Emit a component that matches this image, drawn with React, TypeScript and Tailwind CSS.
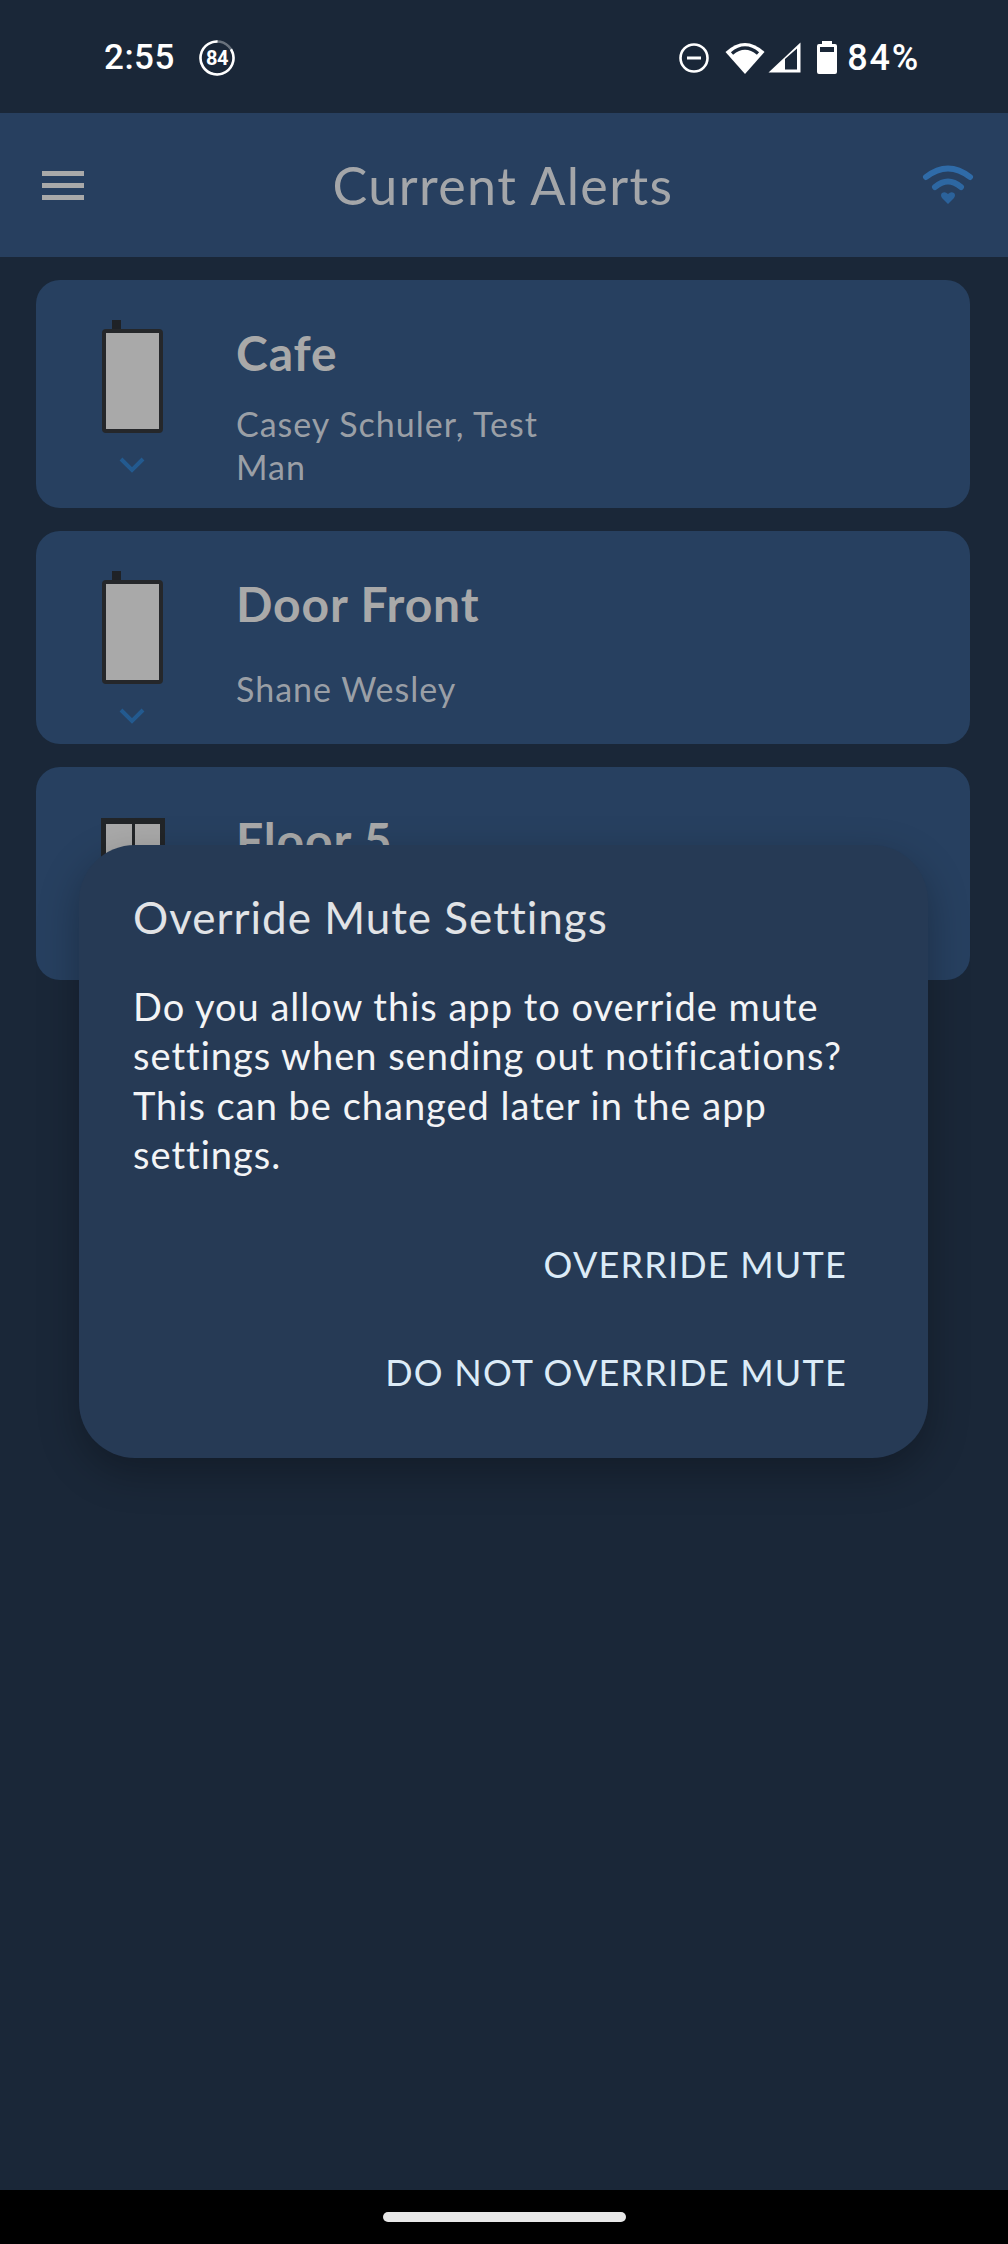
const FONT = "font-['Lato','Noto_Sans',sans-serif]";

type Alert = {
  name: string;
  people: string[];
  height: string;
  peopleGap: string;
  kind: "door" | "window";
};

const ALERTS: Alert[] = [
  { name: "Cafe", people: ["Casey Schuler, Test", "Man"], height: "h-[228px]", peopleGap: "mt-[19px]", kind: "door" },
  { name: "Door Front", people: ["Shane Wesley"], height: "h-[213px]", peopleGap: "mt-[33px]", kind: "door" },
  { name: "Floor 5", people: [], height: "h-[213px]", peopleGap: "mt-[33px]", kind: "window" },
];

function DoorIcon() {
  return (
    <div className="pl-[66px] pt-[40px]">
      <div className="ml-[10px] h-[9px] w-[9px] bg-[#1f2226]" />
      <div className="h-[104px] w-[61px] rounded-[4px] border-[4px] border-[#25272a] bg-[#a9a9a9]" />
      <svg className="ml-[17px] mt-[24px]" width="26" height="16" viewBox="0 0 26 16">
        <path d="M2 2 L13 13 L24 2" fill="none" stroke="#235a8f" strokeWidth="4" />
      </svg>
    </div>
  );
}

function WindowIcon() {
  return (
    <div className="pl-[65px] pt-[51px]">
      <div className="flex h-[100px] w-[64px] gap-[3px] border-x-[5px] border-t-[6px] border-[#222528] bg-[#222528]">
        <div className="flex-1 bg-[#a9a9a9]" />
        <div className="flex-1 bg-[#a9a9a9]" />
      </div>
    </div>
  );
}

function AlertCard({ alert }: { alert: Alert }) {
  return (
    <div className={`flex overflow-hidden rounded-[24px] bg-[#274060] ${alert.height}`}>
      <div className="w-[200px] shrink-0">{alert.kind === "door" ? <DoorIcon /> : <WindowIcon />}</div>
      <div className="pt-[43px]">
        <p className="text-[48px] font-bold leading-[60px] tracking-[0.9px] text-[#a9a9a9]">{alert.name}</p>
        <div className={`${alert.peopleGap} text-[34px] leading-[43px] tracking-[1px] text-[#9a9fa6]`}>
          {alert.people.map((p) => (
            <p key={p}>{p}</p>
          ))}
        </div>
      </div>
    </div>
  );
}

function BatteryBadge() {
  return (
    <svg className="ml-[24px]" width="36" height="36" viewBox="0 0 36 36">
      <circle cx="18" cy="18" r="16.5" fill="none" stroke="#fff" strokeOpacity="0.35" strokeWidth="2.5" />
      <circle
        cx="18"
        cy="18"
        r="16.5"
        fill="none"
        stroke="#fff"
        strokeWidth="2.5"
        strokeDasharray="87 104"
        transform="rotate(-32 18 18)"
      />
      <text x="18" y="25" textAnchor="middle" fontSize="20" fontWeight="700" fill="#fff" letterSpacing="-0.5">
        84
      </text>
    </svg>
  );
}

function StatusIcons() {
  return (
    <div className="flex items-center">
      <svg width="30" height="30" viewBox="0 0 30 30">
        <circle cx="15" cy="15" r="13.5" fill="none" stroke="#fff" strokeWidth="2.6" />
        <rect x="8" y="13.5" width="14" height="3" fill="#fff" />
      </svg>
      <svg className="ml-[16px]" width="40" height="33" viewBox="0 0 40 33">
        <path d="M0.5 11 Q20 -7 39.5 11 L20 33 Z" fill="#fff" />
        <path d="M7 12.5 Q20 1.5 33 12.5" fill="none" stroke="#1a2738" strokeWidth="3.4" />
      </svg>
      <svg className="ml-[3px]" width="33" height="31" viewBox="0 0 33 31">
        <path d="M0.5 30.5 L32.5 0.5 V30.5 Z" fill="#fff" />
        <path d="M17 17 L29 6.5 V27.5 H17 Z" fill="#1a2738" />
      </svg>
      <svg className="ml-[16px]" width="20" height="33" viewBox="0 0 20 33">
        <path d="M5 0 H15 V3 H18 Q20 3 20 5 V31 Q20 33 18 33 H2 Q0 33 0 31 V5 Q0 3 2 3 H5 Z" fill="#fff" />
        <rect x="3" y="6" width="14" height="5" fill="#1a2738" />
      </svg>
      <span className="ml-[10px] text-[36px] font-medium leading-none tracking-[1.8px] text-white">84%</span>
    </div>
  );
}

function HeartWifi() {
  return (
    <svg width="52" height="40" viewBox="0 0 52 40">
      <path d="M4 12 Q26 -5 48 12" fill="none" stroke="#2f6ba8" strokeWidth="6" strokeLinecap="round" />
      <path d="M13 22 Q26 11 39 22" fill="none" stroke="#2d67a2" strokeWidth="6" strokeLinecap="round" />
      <path d="M26 39 L20 33 Q18 30 20 28 Q23 26 26 29 Q29 26 32 28 Q34 30 32 33 Z" fill="#2b629b" />
    </svg>
  );
}

export default function App() {
  return (
    <div className={`relative flex h-[2244px] w-[1008px] flex-col overflow-hidden bg-[#1a2738] ${FONT}`}>
      <div className="flex h-[113px] shrink-0 items-center justify-between pl-[104px] pr-[88px] pt-[2px] font-['Roboto',sans-serif]">
        <div className="flex items-center">
          <span className="text-[35px] font-medium leading-none tracking-[0.5px] text-white">2:55</span>
          <BatteryBadge />
        </div>
        <StatusIcons />
      </div>

      <header className="flex h-[144px] shrink-0 items-center justify-between bg-[#273f5f] pl-[42px] pr-[34px]">
        <div className="flex w-[42px] flex-col gap-[7px]">
          <div className="h-[5px] bg-[#a9a9a9]" />
          <div className="h-[5px] bg-[#a9a9a9]" />
          <div className="h-[5px] bg-[#a9a9a9]" />
        </div>
        <h1 className="text-[52px] font-normal leading-none tracking-[1.4px] text-[#a4a6a9]">Current Alerts</h1>
        <HeartWifi />
      </header>

      <main className="flex flex-1 flex-col gap-[23px] pl-[36px] pr-[38px] pt-[23px]">
        {ALERTS.map((a) => (
          <AlertCard key={a.name} alert={a} />
        ))}
      </main>

      <div className="flex h-[54px] shrink-0 justify-center bg-black pt-[22px]">
        <div className="h-[10px] w-[243px] rounded-full bg-[#e8e8e8]" />
      </div>

      <div className="absolute left-[79px] top-[845px] h-[613px] w-[849px] rounded-[56px] bg-[#263a55] pl-[54px] pt-[46px] shadow-[0_14px_40px_rgba(0,0,0,0.28)]">
        <h2 className="text-[44px] font-normal leading-[52px] tracking-[1px] text-[#e1e3e6]">Override Mute Settings</h2>
        <p className="mt-[39px] w-[740px] text-[38px] leading-[49.3px] tracking-[1px] text-[#f3f4f6]">
          Do you allow this app to override mute settings when sending out notifications? This can be changed later in the app settings.
        </p>
        <div className="mt-[31px] flex flex-col items-end pr-[81px] text-[36px] tracking-[1.2px] text-[#dcebf7]">
          <button className="h-[108px]">OVERRIDE MUTE</button>
          <button className="h-[108px]">DO NOT OVERRIDE MUTE</button>
        </div>
      </div>
    </div>
  );
}
